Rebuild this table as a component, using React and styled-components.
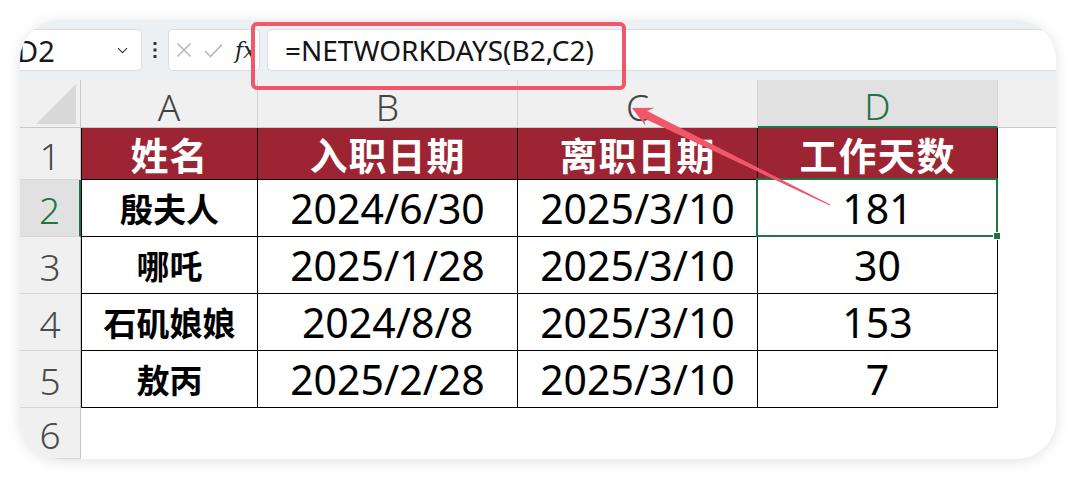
import React from 'react';
import styled, { createGlobalStyle } from 'styled-components';
import { ChevronDown } from 'lucide-react';

const Global = createGlobalStyle`
  html, body { margin: 0; padding: 0; background: #ffffff; }
  body { font-family: "Noto Sans", "Noto Sans CJK SC", sans-serif; }
`;

const Page = styled.div`
  width: 1076px;
  height: 479px;
  padding: 20px;
  box-sizing: border-box;
`;

const Card = styled.div`
  position: relative;
  width: 1036px;
  height: 439px;
  border-radius: 40px;
  overflow: hidden;
  background: #ffffff;
  box-shadow: 0 2px 14px rgba(0, 0, 0, 0.12);
  display: flex;
  flex-direction: column;
`;

const FormulaBar = styled.div`
  height: 60px;
  flex: none;
  box-sizing: border-box;
  padding-top: 9px;
  background: #edf0f3;
  display: flex;
  align-items: flex-start;
`;

const Box = styled.div`
  height: 42px;
  box-sizing: border-box;
  background: #ffffff;
  border: 1px solid #dadde1;
  border-radius: 5px;
  display: flex;
  align-items: center;
`;

const NameBox = styled(Box)`
  width: 130px;
  margin-left: -8px;
  padding: 0 10px 0 4px;
  justify-content: space-between;
  font-size: 29px;
  color: #1a1a1a;
`;

const Dots = styled.div`
  width: 26px;
  height: 42px;
  display: flex;
  align-items: center;
  justify-content: center;
`;

const FxBox = styled(Box)`
  width: 92px;
  padding-left: 7px;
  gap: 12px;
  color: #b0b0b0;
`;

const Fx = styled.span`
  font-family: "DejaVu Serif", "Liberation Serif", serif;
  font-style: italic;
  font-size: 22px;
  color: #222;
`;

const FormulaInput = styled(Box)`
  flex: 1;
  margin-left: 7px;
  padding-left: 17px;
  border-right: none;
  border-radius: 5px 0 0 5px;
  font-size: 28px;
  color: #141414;
`;

const Sheet = styled.div`
  flex: 1;
  display: grid;
  grid-template-columns: 61px 177px 260px 240px 240px 1fr;
  grid-template-rows: 48px 52px 57px 57px 57px 57px 1fr;
`;

const Corner = styled.div`
  background: #f0f0f0;
  border-right: 1px solid #c8c8c8;
  border-bottom: 1px solid #c8c8c8;
  display: flex;
  align-items: flex-end;
  justify-content: flex-end;
  padding: 0 4px 3px 0;
`;

const Triangle = styled.div`
  width: 40px;
  height: 40px;
  background: #d8d8d8;
  clip-path: polygon(100% 0, 100% 100%, 0 100%);
`;

const ColHead = styled.div`
  background: ${p => (p.$active ? '#e1e1e1' : '#f0f0f0')};
  color: ${p => (p.$active ? '#217346' : '#444')};
  border-right: 1px solid #d2d2d2;
  border-bottom: ${p => (p.$active ? '2px solid #217346' : '1px solid #c8c8c8')};
  display: flex;
  align-items: center;
  justify-content: center;
  padding-top: 5px;
  box-sizing: border-box;
  font-size: 37px;
  font-weight: 300;
  line-height: 1;
`;

const RowHead = styled.div`
  background: ${p => (p.$active ? '#e1e1e1' : '#f0f0f0')};
  color: ${p => (p.$active ? '#217346' : '#4a4a4a')};
  border-right: ${p => (p.$active ? '2px solid #217346' : '1px solid #c8c8c8')};
  border-bottom: 1px solid #d6d6d6;
  display: flex;
  align-items: center;
  justify-content: center;
  padding-top: 3px;
  box-sizing: border-box;
  font-size: 37px;
  font-weight: 300;
  line-height: 1;
`;

const Cell = styled.div`
  position: relative;
  box-sizing: border-box;
  border-right: 1px solid #000;
  border-bottom: 1px solid #000;
  border-left: ${p => (p.$first ? '1px solid #000' : 'none')};
  background: ${p => (p.$head ? '#9d2433' : '#ffffff')};
  color: ${p => (p.$head ? '#ffffff' : '#000000')};
  display: flex;
  align-items: center;
  justify-content: center;
  line-height: 1;
  font-size: ${p => (p.$head ? '38px' : p.$name ? '33px' : '41px')};
  font-weight: ${p => (p.$head || p.$name ? 700 : 400)};
  font-family: ${p =>
    p.$head || p.$name
      ? '"Noto Sans CJK SC", sans-serif'
      : '"Noto Sans", sans-serif'};
  letter-spacing: ${p => (p.$head ? '1px' : '0')};

  ${p =>
    p.$selected &&
    `
    &::after {
      content: "";
      position: absolute;
      top: -2px; left: -2px; right: -1px; bottom: -1px;
      border: 2px solid #217346;
      pointer-events: none;
    }
    &::before {
      content: "";
      position: absolute;
      right: -4px; bottom: -4px;
      width: 6px; height: 6px;
      background: #217346;
      border: 1px solid #fff;
      z-index: 2;
    }
  `}
`;

const Blank = styled.div`
  background: ${p => (p.$head ? '#f0f0f0' : '#ffffff')};
  border-bottom: ${p => (p.$head ? '1px solid #c8c8c8' : 'none')};
`;

const Highlight = styled.div`
  position: absolute;
  left: 231px;
  top: 2px;
  width: 375px;
  height: 68px;
  box-sizing: border-box;
  border: 4px solid #f2566a;
  border-radius: 6px;
  pointer-events: none;
`;

const ArrowLayer = styled.svg`
  position: absolute;
  left: 0;
  top: 0;
  width: 1036px;
  height: 439px;
  pointer-events: none;
`;

const VDots = () => (
  <svg width="6" height="18" viewBox="0 0 6 18">
    <rect x="1.5" y="1" width="3" height="3" fill="#333" />
    <rect x="1.5" y="7.5" width="3" height="3" fill="#333" />
    <rect x="1.5" y="14" width="3" height="3" fill="#333" />
  </svg>
);

const CancelIcon = () => (
  <svg width="16" height="16" viewBox="0 0 16 16" fill="none" stroke="#b0b0b0" strokeWidth="1.4">
    <path d="M1.5 1.5 L14.5 14.5 M14.5 1.5 L1.5 14.5" />
  </svg>
);

const EnterIcon = () => (
  <svg width="19" height="15" viewBox="0 0 19 15" fill="none" stroke="#b0b0b0" strokeWidth="1.4">
    <path d="M1 8 L6.5 13.5 L18 1.5" />
  </svg>
);

const headers = ['姓名', '入职日期', '离职日期', '工作天数'];
const rows = [
  ['殷夫人', '2024/6/30', '2025/3/10', '181'],
  ['哪吒', '2025/1/28', '2025/3/10', '30'],
  ['石矶娘娘', '2024/8/8', '2025/3/10', '153'],
  ['敖丙', '2025/2/28', '2025/3/10', '7'],
];

export default function App() {
  return (
    <>
      <Global />
      <Page>
        <Card>
          <FormulaBar>
            <NameBox>
              <span>D2</span>
              <ChevronDown size={17} strokeWidth={1.6} color="#333" />
            </NameBox>
            <Dots>
              <VDots />
            </Dots>
            <FxBox>
              <CancelIcon />
              <EnterIcon />
              <Fx>fx</Fx>
            </FxBox>
            <FormulaInput>=NETWORKDAYS(B2,C2)</FormulaInput>
          </FormulaBar>
          <Sheet>
            <Corner>
              <Triangle />
            </Corner>
            <ColHead>A</ColHead>
            <ColHead>B</ColHead>
            <ColHead>C</ColHead>
            <ColHead $active>D</ColHead>
            <Blank $head />

            <RowHead>1</RowHead>
            {headers.map((h, i) => (
              <Cell key={h} $head $first={i === 0}>
                {h}
              </Cell>
            ))}
            <Blank />

            {rows.map((r, ri) => (
              <React.Fragment key={ri}>
                <RowHead $active={ri === 0}>{ri + 2}</RowHead>
                <Cell $first $name>{r[0]}</Cell>
                <Cell>{r[1]}</Cell>
                <Cell>{r[2]}</Cell>
                <Cell $selected={ri === 0}>{r[3]}</Cell>
                <Blank />
              </React.Fragment>
            ))}

            <RowHead>6</RowHead>
            <Blank />
            <Blank />
            <Blank />
            <Blank />
            <Blank />
          </Sheet>
          <Highlight />
          <ArrowLayer viewBox="0 0 1036 439">
            <polygon
              points="612,88 634.4,87.8 627.2,91 810.2,184.6 809.8,185.4 623.7,98.2 625.6,105.8"
              fill="#f2566a"
            />
          </ArrowLayer>
        </Card>
      </Page>
    </>
  );
}
